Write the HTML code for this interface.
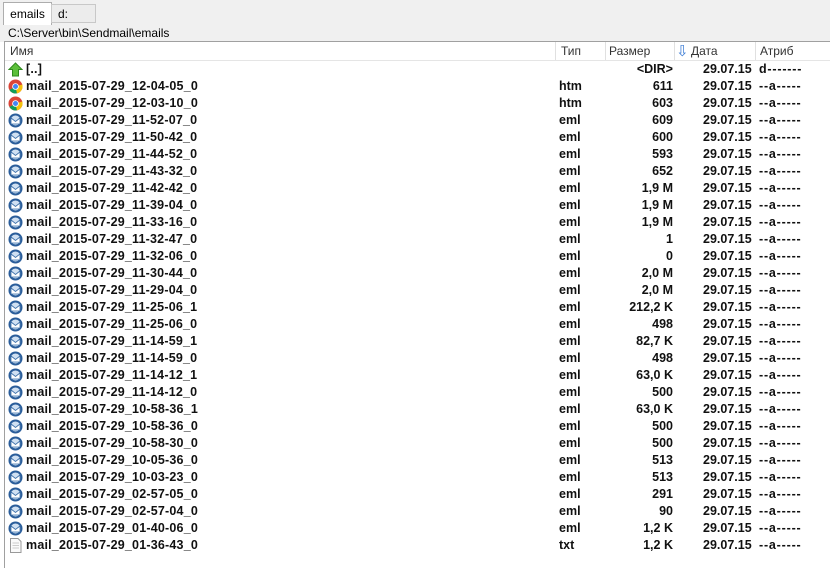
<!DOCTYPE html>
<html><head><meta charset="utf-8"><style>
body{margin:0;width:830px;height:568px;background:#fff;font-family:"Liberation Sans",sans-serif;position:relative;overflow:hidden}
.top{position:absolute;left:0;top:0;width:830px;height:42px;background:#f0f0f0}
.tab1{position:absolute;left:3px;top:2px;width:47px;height:22px;background:#fff;border:1px solid #adadad;border-bottom:none;font-size:12px;line-height:22px;text-align:center}
.tab2{position:absolute;left:51px;top:4px;width:45px;height:19px;background:#ececec;border:1px solid #c8c8c8;font-size:12px;line-height:19px;padding-left:6px;box-sizing:border-box}
.path{position:absolute;left:8px;top:26px;font-size:12px}
.hdr{position:absolute;left:4px;top:41px;width:826px;height:18px;background:#fff;border-top:1px solid #a0a0a0;border-bottom:1px solid #e5e5e5;font-size:12px;color:#333}
.hdr span{position:absolute;top:2px}
.hdr i{position:absolute;top:0;width:1px;height:18px;background:#e0e0e0}
.lb{position:absolute;left:4px;top:41px;width:1px;height:527px;background:#a0a0a0}
.r{position:absolute;left:0;height:17px;width:830px;font-size:12.5px;font-weight:bold;line-height:17px;color:#111}
.r span{position:absolute}
.n{left:26px;letter-spacing:.2px}.t{left:559px}.s{right:157px}.d{left:703px}.a{left:759px;letter-spacing:.8px}
.ic{position:absolute;left:8px;top:1px;width:15px;height:15px}
</style></head><body>
<div class="top"><div class="tab1">emails</div><div class="tab2">d:</div><div class="path">C:\Server\bin\Sendmail\emails</div></div>
<div class="hdr"><span style="left:6px">Имя</span><i style="left:551px"></i><span style="left:557px">Тип</span><i style="left:601px"></i><span style="left:605px">Размер</span><i style="left:670px"></i><span style="left:672px;top:0;color:#3a7bd5;font-size:15px">⇩</span><span style="left:687px">Дата</span><i style="left:751px"></i><span style="left:756px">Атриб</span></div>
<div class="lb"></div>
<div id="rows"></div>
<script>
const d=[["[..]","","<DIR>","d-------","up"],
["mail_2015-07-29_12-04-05_0","htm","611","--a-----","c"],
["mail_2015-07-29_12-03-10_0","htm","603","--a-----","c"],
["mail_2015-07-29_11-52-07_0","eml","609"],["mail_2015-07-29_11-50-42_0","eml","600"],
["mail_2015-07-29_11-44-52_0","eml","593"],["mail_2015-07-29_11-43-32_0","eml","652"],
["mail_2015-07-29_11-42-42_0","eml","1,9 M"],["mail_2015-07-29_11-39-04_0","eml","1,9 M"],
["mail_2015-07-29_11-33-16_0","eml","1,9 M"],["mail_2015-07-29_11-32-47_0","eml","1"],
["mail_2015-07-29_11-32-06_0","eml","0"],["mail_2015-07-29_11-30-44_0","eml","2,0 M"],
["mail_2015-07-29_11-29-04_0","eml","2,0 M"],["mail_2015-07-29_11-25-06_1","eml","212,2 K"],
["mail_2015-07-29_11-25-06_0","eml","498"],["mail_2015-07-29_11-14-59_1","eml","82,7 K"],
["mail_2015-07-29_11-14-59_0","eml","498"],["mail_2015-07-29_11-14-12_1","eml","63,0 K"],
["mail_2015-07-29_11-14-12_0","eml","500"],["mail_2015-07-29_10-58-36_1","eml","63,0 K"],
["mail_2015-07-29_10-58-36_0","eml","500"],["mail_2015-07-29_10-58-30_0","eml","500"],
["mail_2015-07-29_10-05-36_0","eml","513"],["mail_2015-07-29_10-03-23_0","eml","513"],
["mail_2015-07-29_02-57-05_0","eml","291"],["mail_2015-07-29_02-57-04_0","eml","90"],
["mail_2015-07-29_01-40-06_0","eml","1,2 K"],["mail_2015-07-29_01-36-43_0","txt","1,2 K","--a-----","f"]];
const ic={up:'<svg class="ic" viewBox="0 0 15 15"><path d="M7.5 1L14 7.5H10.5V14H4.5V7.5H1Z" fill="#5cbf3a" stroke="#2f8a1d"/></svg>',
c:'<svg class="ic" viewBox="0 0 15 15"><circle cx="7.5" cy="7.5" r="7" fill="#db4437"/><path d="M7.5 7.5L1.4 11A7 7 0 0 0 9 14.3Z" fill="#0f9d58"/><path d="M7.5 7.5L9 14.3A7 7 0 0 0 14.3 5.5Z" fill="#f4c20d"/><circle cx="7.5" cy="7.5" r="3.3" fill="#fff"/><circle cx="7.5" cy="7.5" r="2.5" fill="#4285f4"/></svg>',
e:'<svg class="ic" viewBox="0 0 15 15"><circle cx="7.5" cy="7.5" r="7" fill="#2a5d9a"/><circle cx="7.5" cy="7.5" r="5" fill="#cfe0f2"/><path d="M3 5L7.5 8.5L12 5V11H3Z" fill="#fff" stroke="#3a6ea8" stroke-width=".8"/></svg>',
f:'<svg class="ic" viewBox="0 0 15 15"><path d="M2.5 .5H10L13 3.5V14.5H2.5Z" fill="#fafafa" stroke="#999"/><path d="M4.5 5H11M4.5 7.5H11M4.5 10H11" stroke="#ccc"/></svg>'};
let h='';d.forEach((r,i)=>{h+=`<div class="r" style="top:${61+i*17}px">${ic[r[4]||'e']}<span class="n">${r[0]}</span><span class="t">${r[1]}</span><span class="s">${r[2].replace('<','&lt;').replace('>','&gt;')}</span><span class="d">29.07.15</span><span class="a">${r[3]||'--a-----'}</span></div>`});
document.getElementById('rows').innerHTML=h;
</script>
</body></html>
